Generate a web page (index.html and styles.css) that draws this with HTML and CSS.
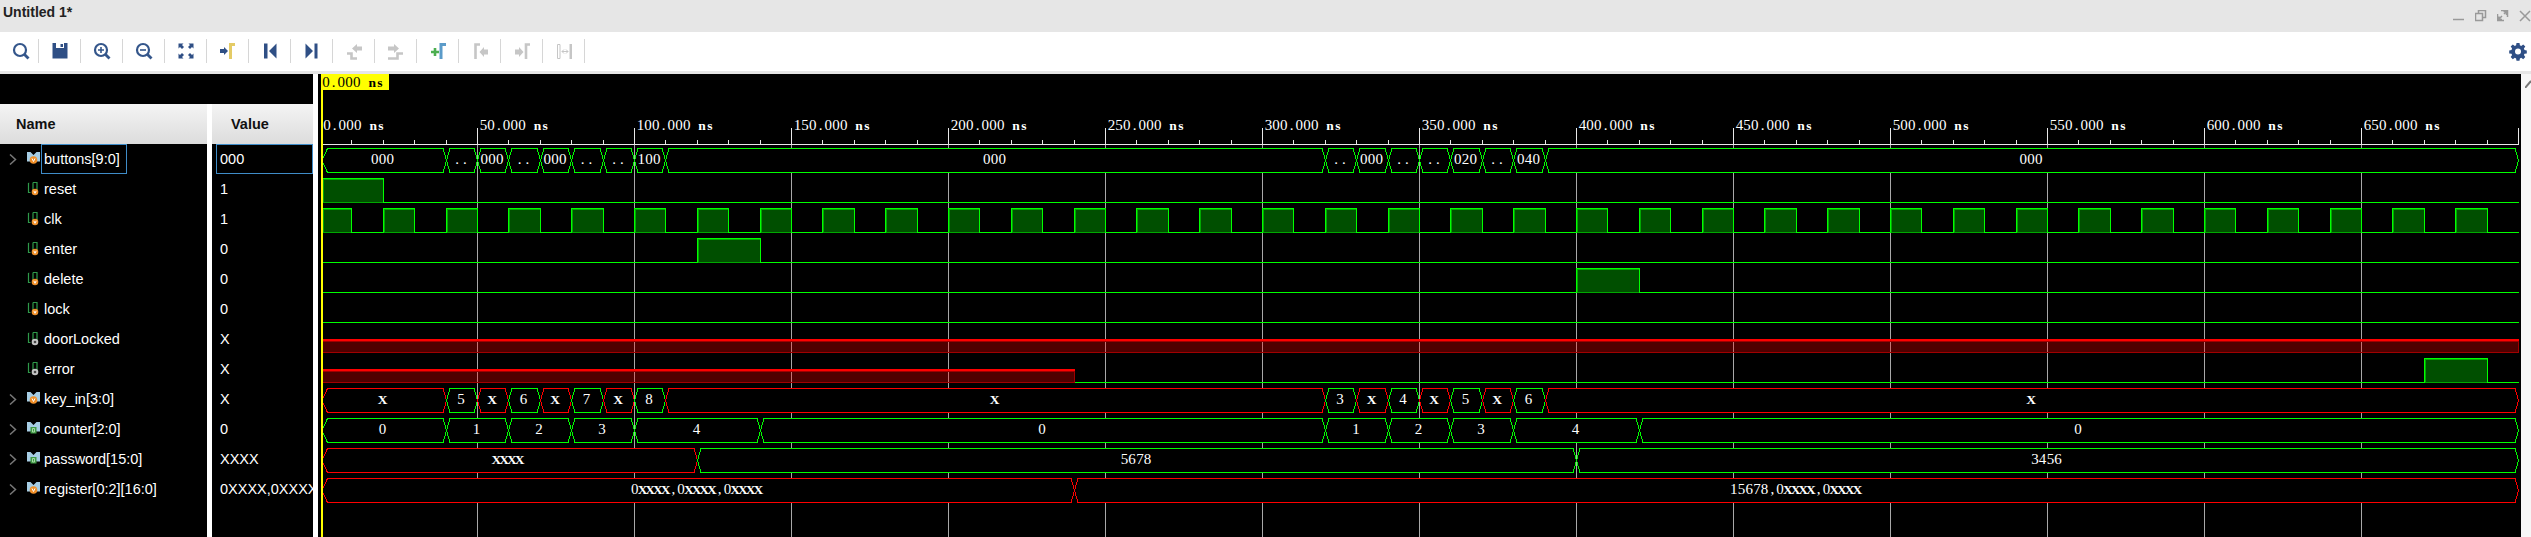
FILE: index.html
```html
<!DOCTYPE html>
<html lang="en">
<head>
<meta charset="utf-8">
<title>Untitled 1*</title>
<link rel="stylesheet" href="styles.css">
</head>
<body>
<header class="titlebar">
  <span class="title">Untitled 1*</span>
  <div class="win-controls">
    <svg class="win" viewBox="0 0 12 12"><path d="M0 9.500h11"/></svg>
    <svg class="win" viewBox="0 0 12 12"><path d="M.5 3.500h7v7h-7zM3.500 3V.5h7v7H8"/></svg>
    <svg class="win" viewBox="0 0 12 12"><path d="M.5 4V10.500H7M4 .5h6.500V7M1 10l4-4M2 6.500V9.500H5M10 1L7 4M6.500 1.500h3V5"/></svg>
    <svg class="win" viewBox="0 0 12 12"><path d="M1 1l10 10M11 1L1 11"/></svg>
  </div>
</header>

<nav class="toolbar">
  <button class="tool"><svg viewBox="0 0 24 24"><circle class="ln" cx="11" cy="11" r="6"/><path class="ln thick" d="M15 15l4.500 4.500"/></svg></button>
  <button class="tool"><svg viewBox="0 0 24 24"><path class="navy" d="M4.500 4H19.500V19.500H4.500z"/><path class="paper" d="M8 4h8v5H8z"/><path class="navy" d="M12.500 5H15V8H12.500z"/></svg></button>
  <button class="tool"><svg viewBox="0 0 24 24"><circle class="ln" cx="11" cy="11" r="6"/><path class="ln thick" d="M15 15l4.500 4.500"/><path class="ln thin" d="M11 8v6M8 11h6"/></svg></button>
  <button class="tool"><svg viewBox="0 0 24 24"><circle class="ln" cx="11" cy="11" r="6"/><path class="ln thick" d="M15 15l4.500 4.500"/><path class="ln thin" d="M8 11h6"/></svg></button>
  <button class="tool"><svg viewBox="0 0 24 24"><path class="navy" d="M4.500 4.500h5l-1.500 1.500 2 2-2 2-2-2-1.500 1.500zM19.500 4.500v5l-1.500-1.500-2 2-2-2 2-2-1.500-1.500zM4.500 19.500v-5l1.500 1.500 2-2 2 2-2 2 1.500 1.500zM19.500 19.500h-5l1.500-1.500-2-2 2-2 2 2 1.500-1.500z"/></svg></button>
  <button class="tool"><svg viewBox="0 0 24 24"><path class="navy" d="M4 10h4V8l4 4-4 4v-2H4z"/><path class="mark-yellow" d="M14.500 20V5.500H19"/></svg></button>
  <button class="tool"><svg viewBox="0 0 24 24"><path class="navy" d="M6 4.500h3.500V19.500H6zM18.500 4.500V19.500L11 12z"/></svg></button>
  <button class="tool"><svg viewBox="0 0 24 24"><path class="navy" d="M17.500 4.500h-3V19.500h3zM5.500 4.500V19.500L13 12z"/></svg></button>
  <button class="tool"><svg viewBox="0 0 24 24"><path class="mark-grey" d="M5 14.500h4.500V19.500H15"/><path class="grey" d="M20 7.500h-5V5l-5 4.500 5 4.500V11.500h5z"/></svg></button>
  <button class="tool"><svg viewBox="0 0 24 24"><path class="mark-grey" d="M4 19.500h9.500V14.500H19"/><path class="grey" d="M4 7.500h6V5l5 4.500L10 14V11.500H4z"/></svg></button>
  <button class="tool"><svg viewBox="0 0 24 24"><path class="plus" d="M5 13h8M9 9v8"/><path class="mark-blue" d="M15 20V5.500H20"/></svg></button>
  <button class="tool"><svg viewBox="0 0 24 24"><path class="mark-grey" d="M7.500 20V5.500H12"/><path class="grey" d="M20 10.500h-4V8l-4.500 5 4.500 5V15.500h4z"/></svg></button>
  <button class="tool"><svg viewBox="0 0 24 24"><path class="grey" d="M5 10.500h4V8l4.500 5L9 18V15.500H5z"/><path class="mark-grey" d="M16 20V5.500H20"/></svg></button>
  <button class="tool"><svg viewBox="0 0 24 24"><path class="hollow" d="M5.500 5.500h2.500V19.500H5.500zM10 12.500h6M10 12.500l2-2M10 12.500l2 2M16 12.500l-2-2M16 12.500l-2 2"/><path class="grey" d="M17.500 5h2.500V20h-2.500z"/></svg></button>
  <svg class="gear" viewBox="0 0 16 16"><path class="navy" fill-rule="evenodd" d="M6.500 0h3l.4 2.300 1.300.6L13.200 1.500l2.100 2.100-1.400 2 .6 1.400 2.300.4v3l-2.300.4-.6 1.300 1.400 2-2.100 2.100-2-1.400-1.300.6-.4 2.300h-3l-.4-2.300-1.300-.6-2 1.400L.7 14.100l1.400-2-.6-1.300L-.8 10.400V7.400l2.300-.4.6-1.400-1.400-2L2.800 1.500l2 1.400 1.300-.6zM8 5.500a3 3 0 1 0 0 6 3 3 0 0 0 0-6z"/></svg>
</nav>
<div class="strip"></div>

<main class="main">
  <section class="signals">
    <div class="signals-top"></div>
    <div class="columns">
      <div class="col col-names">
        <div class="col-head">Name</div>
        <div class="row"><svg class="chev" viewBox="0 0 8 11"><path d="M1 .5l5.500 5-5.500 5"/></svg><svg class="sig" viewBox="0 0 15 14"><use href="#bus-v"/></svg><span class="label selected">buttons[9:0]</span></div>
        <div class="row"><span class="chev-slot"></span><svg class="sig" viewBox="0 0 15 14"><use href="#bit-v"/></svg><span class="label">reset</span></div>
        <div class="row"><span class="chev-slot"></span><svg class="sig" viewBox="0 0 15 14"><use href="#bit-v"/></svg><span class="label">clk</span></div>
        <div class="row"><span class="chev-slot"></span><svg class="sig" viewBox="0 0 15 14"><use href="#bit-v"/></svg><span class="label">enter</span></div>
        <div class="row"><span class="chev-slot"></span><svg class="sig" viewBox="0 0 15 14"><use href="#bit-v"/></svg><span class="label">delete</span></div>
        <div class="row"><span class="chev-slot"></span><svg class="sig" viewBox="0 0 15 14"><use href="#bit-v"/></svg><span class="label">lock</span></div>
        <div class="row"><span class="chev-slot"></span><svg class="sig" viewBox="0 0 15 14"><use href="#bit-o"/></svg><span class="label">doorLocked</span></div>
        <div class="row"><span class="chev-slot"></span><svg class="sig" viewBox="0 0 15 14"><use href="#bit-o"/></svg><span class="label">error</span></div>
        <div class="row"><svg class="chev" viewBox="0 0 8 11"><path d="M1 .5l5.500 5-5.500 5"/></svg><svg class="sig" viewBox="0 0 15 14"><use href="#bus-v"/></svg><span class="label">key_in[3:0]</span></div>
        <div class="row"><svg class="chev" viewBox="0 0 8 11"><path d="M1 .5l5.500 5-5.500 5"/></svg><svg class="sig" viewBox="0 0 15 14"><use href="#bus-g"/></svg><span class="label">counter[2:0]</span></div>
        <div class="row"><svg class="chev" viewBox="0 0 8 11"><path d="M1 .5l5.500 5-5.500 5"/></svg><svg class="sig" viewBox="0 0 15 14"><use href="#bus-g"/></svg><span class="label">password[15:0]</span></div>
        <div class="row"><svg class="chev" viewBox="0 0 8 11"><path d="M1 .5l5.500 5-5.500 5"/></svg><svg class="sig" viewBox="0 0 15 14"><use href="#bus-v"/></svg><span class="label">register[0:2][16:0]</span></div>
      </div>
      <div class="col col-values">
        <div class="col-head col-head-value">Value</div>
        <div class="row"><span class="value selected-value">000</span></div>
        <div class="row"><span class="value">1</span></div>
        <div class="row"><span class="value">1</span></div>
        <div class="row"><span class="value">0</span></div>
        <div class="row"><span class="value">0</span></div>
        <div class="row"><span class="value">0</span></div>
        <div class="row"><span class="value">X</span></div>
        <div class="row"><span class="value">X</span></div>
        <div class="row"><span class="value">X</span></div>
        <div class="row"><span class="value">0</span></div>
        <div class="row"><span class="value">XXXX</span></div>
        <div class="row"><span class="value">0XXXX,0XXXX,0XXXX</span></div>
      </div>
    </div>
  </section>
  <svg id="wave" class="wave" viewBox="318 74 2203 463"></svg>
  <aside class="side"><svg class="side-mark" viewBox="0 0 6 8"><path d="M0 8L6 1"/></svg></aside>
</main>

<svg class="defs">
  <defs>
    <g id="bus-base"><path class="bus-body" d="M1 0h3.500l3 3 3-3H14v9.500H10.500L7.500 7l-3 2.500H1z"/></g>
    <g id="bus-v"><use href="#bus-base"/><circle class="dot-orange" cx="7.500" cy="8" r="3.800"/><path class="dot-mark" d="M6 6.500l1.500 3 1.500-3"/></g>
    <g id="bus-g"><use href="#bus-base"/><rect class="dot-green" x="4.500" y="5" width="6" height="6.500"/><path class="dot-mark-g" d="M6.500 6.500h2v3.500h-2z"/></g>
    <g id="bit-base"><path class="bit-lines" d="M2.500 1v9.500h2M3 1.500L2.500 1M7 .5h4v8M7 .5v8"/></g>
    <g id="bit-v"><use href="#bit-base"/><circle class="dot-orange" cx="9" cy="10" r="3.300"/><path class="dot-mark" d="M7.800 8.800l1.200 2.500 1.200-2.500"/></g>
    <g id="bit-o"><use href="#bit-base"/><circle class="dot-grey" cx="9" cy="10" r="3.300"/><circle class="dot-hole" cx="9" cy="10" r="1.300"/></g>
  </defs>
</svg>
<script src="wave.js"></script>
</body>
</html>
```

FILE: styles.css
```css
* { box-sizing: border-box; }
html, body { margin: 0; height: 537px; overflow: hidden; background: #fff; }
body { font-family: "Liberation Sans", Arial, sans-serif; display: flex; flex-direction: column; }

.titlebar { height: 32px; background: #e6e6e6; display: flex; align-items: flex-start; padding-left: 3px; }
.title { font-size: 14px; font-weight: bold; line-height: 24px; color: #222; }
.win-controls { margin-left: auto; display: flex; gap: 10px; padding-top: 10px; }
.win { width: 12px; height: 12px; fill: none; stroke: #999; stroke-width: 1.500; }

.toolbar { height: 39px; background: #fff; display: flex; align-items: center; padding-bottom: 1px; }
.tool { width: 42px; height: 24px; padding: 0; border: 0; border-right: 1px solid #d6d6d6; background: none; display: flex; align-items: center; justify-content: center; }
.tool:first-child { width: 39px; padding-left: 4px; }
.tool svg { width: 24px; height: 24px; }
.gear { width: 16px; height: 16px; margin-left: auto; margin-right: 5px; overflow: visible; }
.ln { fill: none; stroke: #34568b; stroke-width: 2.200; }
.ln.thick { stroke-width: 2.800; }
.ln.thin { stroke-width: 1.600; }
.navy { fill: #2f4f85; }
.paper { fill: #fff; }
.grey { fill: #c6c6c6; }
.hollow { fill: none; stroke: #c6c6c6; stroke-width: 1; }
.mark-yellow { fill: none; stroke: #e4cb66; stroke-width: 3; }
.mark-grey { fill: none; stroke: #c6c6c6; stroke-width: 2.600; }
.mark-blue { fill: none; stroke: #5b9bc9; stroke-width: 3; }
.plus { fill: none; stroke: #4cae50; stroke-width: 2.600; }

.strip { height: 3px; background: #e6e6e6; }

.main { flex: 1; display: flex; min-height: 0; background: #fff; }
.signals { width: 313px; flex: none; display: flex; flex-direction: column; background: #000; }
.signals-top { height: 30px; }
.columns { flex: 1; display: flex; gap: 5px; background: #fff; }
.col { background: #000; color: #fff; font-size: 14.500px; overflow: hidden; }
.col-names { width: 207px; flex: none; }
.col-values { flex: 1; min-width: 0; }
.col-head { height: 40px; display: flex; align-items: center; padding-left: 16px; font-weight: bold; color: #111; background: linear-gradient(#f4f4f4, #dcdcdc); }
.col-head-value { padding-left: 19px; }
.row { height: 30px; display: flex; align-items: center; white-space: nowrap; }
.chev { width: 8px; height: 11px; margin-left: 9px; margin-right: 9px; fill: none; stroke: #777; stroke-width: 1.500; flex: none; }
.chev-slot { width: 26px; flex: none; }
.sig { width: 15px; height: 14px; flex: none; overflow: visible; }
.label { height: 30px; line-height: 28px; padding: 0 2px; border: 1px solid transparent; }
.label.selected { border-color: #3f8cc8; padding-right: 6px; }
.value { margin-left: 4px; height: 30px; flex: 1; line-height: 28px; padding: 0 3px; border: 1px solid transparent; }
.selected-value { border-color: #3f8cc8; }

.wave { width: 2203px; height: 463px; flex: none; margin-left: 5px; background: #000; display: block; }
.side { flex: 1; padding-top: 6px; background: #f7f7f7; display: flex; justify-content: flex-end; align-items: flex-start; }
.side-mark { width: 6px; height: 8px; fill: none; stroke: #777; stroke-width: 2; }

.defs { width: 0; height: 0; position: absolute; }
.bus-body { fill: #a6cde4; }
.dot-orange { fill: #f0902a; }
.dot-mark { fill: none; stroke: #fff; stroke-width: 1; }
.dot-green { fill: #3f9a45; }
.dot-mark-g { fill: none; stroke: #a6dca8; stroke-width: 1; }
.bit-lines { fill: none; stroke: #2f9a4a; stroke-width: 1.200; }
.dot-grey { fill: #c4c4c4; }
.dot-hole { fill: #444; }

.grid { stroke: #a8a8a8; stroke-width: 1; shape-rendering: crispEdges; }
.tick { stroke: #e8e8e8; stroke-width: 1; shape-rendering: crispEdges; }
.seg { stroke-width: 1; shape-rendering: crispEdges; fill: #000; }
.seg-green { stroke: #00ff00; }
.seg-red { stroke: #ff0000; }
.edge-green { fill: none; stroke: #00ff00; stroke-width: 1; shape-rendering: crispEdges; }
.edge-red { fill: none; stroke: #ff0000; stroke-width: 1; shape-rendering: crispEdges; }
.fill-green { fill: rgba(0, 255, 0, 0.31); stroke: #00a800; stroke-width: 1; shape-rendering: crispEdges; }
.fill-red { fill: rgba(255, 0, 0, 0.31); stroke: #a00000; stroke-width: 1; shape-rendering: crispEdges; }
.wtext { font-family: "Liberation Serif", "Times New Roman", serif; font-size: 15px; fill: #fff; text-anchor: middle; }
.wtext-small { font-size: 13.500px; font-weight: bold; }
.wtext-ns { font-size: 13.500px; font-weight: bold; }
.cursor { stroke: #ffff00; stroke-width: 2; shape-rendering: crispEdges; }
.cursor-box { fill: #ffff00; }
.cursor-text { fill: #000; }
```

FILE: wave.js
```js
// Builds the waveform canvas from the simulation data.
var NS = 'http://www.w3.org/2000/svg';
var svg = document.getElementById('wave');
var X0 = 320, PX = 3.14, ROW0 = 148, PITCH = 30, H = 24, TAPER = 3.5, CELL = 7.72, END = 700;

function px(t) { return Math.round(X0 + t * PX) + 0.5; }
function el(tag, cls, attrs) {
  var e = document.createElementNS(NS, tag);
  if (cls) e.setAttribute('class', cls);
  for (var k in attrs) e.setAttribute(k, attrs[k]);
  svg.appendChild(e);
  return e;
}
function label(str, startX, baseline, extra) {
  var t = el('text', 'wtext' + (extra ? ' ' + extra : ''), { y: baseline });
  for (var i = 0; i < str.length; i++) {
    var ch = str[i], s = document.createElementNS(NS, 'tspan');
    s.setAttribute('x', (startX + CELL * (i + 0.5)).toFixed(1));
    if (ch === 'X') s.setAttribute('class', 'wtext-small');
    else if (ch === 'n' || ch === 's') s.setAttribute('class', 'wtext-ns');
    s.textContent = ch;
    t.appendChild(s);
  }
}

// grid + ruler
for (var t = 50; t < END; t += 50) {
  el('line', 'grid', { x1: px(t), x2: px(t), y1: 144, y2: 537 });
  el('line', 'tick', { x1: px(t), x2: px(t), y1: 128, y2: 144 });
}
el('line', 'tick', { x1: px(END), x2: px(END), y1: 128, y2: 144 });
for (t = 10; t < END; t += 10) {
  if (t % 50) el('line', 'tick', { x1: px(t), x2: px(t), y1: 140, y2: 144 });
}
el('line', 'tick', { x1: 322, x2: px(END), y1: 144.5, y2: 144.5 });
for (t = 0; t < END; t += 50) {
  label(t + '.000 ns', t === 0 ? 323 : px(t) + 2, 130);
}

// signal rows
var rows = [
  { bus: [[0,'000'],[40,'..'],[50,'000'],[60,'..'],[70,'000'],[80,'..'],[90,'..'],[100,'100'],[110,'000'],[320,'..'],[330,'000'],[340,'..'],[350,'..'],[360,'020'],[370,'..'],[380,'040'],[390,'000']] },
  { bit: [[0,1],[20,0]] },
  { bit: (function () { var a = []; for (var i = 0; i < 70; i++) a.push([i * 10, i % 2 ? 0 : 1]); return a; })() },
  { bit: [[0,0],[120,1],[140,0]] },
  { bit: [[0,0],[400,1],[420,0]] },
  { bit: [[0,0]] },
  { bit: [[0,'x']] },
  { bit: [[0,'x'],[240,0],[670,1],[690,0]] },
  { bus: [[0,'X'],[40,'5'],[50,'X'],[60,'6'],[70,'X'],[80,'7'],[90,'X'],[100,'8'],[110,'X'],[320,'3'],[330,'X'],[340,'4'],[350,'X'],[360,'5'],[370,'X'],[380,'6'],[390,'X']] },
  { bus: [[0,'0'],[40,'1'],[60,'2'],[80,'3'],[100,'4'],[140,'0'],[320,'1'],[340,'2'],[360,'3'],[380,'4'],[420,'0']] },
  { bus: [[0,'XXXX'],[120,'5678'],[400,'3456']] },
  { bus: [[0,'0XXXX,0XXXX,0XXXX'],[240,'15678,0XXXX,0XXXX']] }
];

rows.forEach(function (row, r) {
  var top = ROW0 + PITCH * r + 0.5, bot = top + H, mid = top + H / 2, half = top + H / 2;
  if (row.bus) {
    row.bus.forEach(function (seg, i) {
      var a = px(seg[0]), b = i + 1 < row.bus.length ? px(row.bus[i + 1][0]) : px(END);
      if (i === 0) a = 322;
      var isX = seg[1].indexOf('X') >= 0;
      el('polygon', 'seg ' + (isX ? 'seg-red' : 'seg-green'), {
        points: [[a, mid], [a + TAPER + (i === 0 ? 2 : 0), top], [b - TAPER, top], [b, mid], [b - TAPER, bot], [a + TAPER + (i === 0 ? 2 : 0), bot]].join(' ')
      });
      var c = (px(seg[0]) + b) / 2;
      label(seg[1], c - seg[1].length * CELL / 2 - 1, top + 15.5);
    });
  } else {
    row.bit.forEach(function (seg, i) {
      var a = Math.max(px(seg[0]), 322), b = i + 1 < row.bit.length ? px(row.bit[i + 1][0]) : px(END), v = seg[1];
      if (v === 'x') {
        el('rect', 'fill-red', { x: a, y: half + 0.5, width: b - a, height: H / 2 - 0.5 });
        el('path', 'edge-red', { d: 'M' + a + ' ' + half + 'H' + b });
        el('path', 'edge-red', { d: 'M' + a + ' ' + (half - 1) + 'H' + b });
      } else if (v === 1) {
        el('rect', 'fill-green', { x: a + 1, y: top + 1, width: b - a - 1, height: H - 1 });
        el('path', 'edge-green', { d: 'M' + a + ' ' + bot + 'V' + top + 'H' + b + 'V' + bot });
      } else {
        el('path', 'edge-green', { d: 'M' + a + ' ' + bot + 'H' + b });
      }
    });
  }
});

// cursor
el('line', 'cursor', { x1: 321.5, x2: 321.5, y1: 74, y2: 537 });
el('rect', 'cursor-box', { x: 321, y: 74, width: 68, height: 16 });
label('0.000 ns', 322, 87, 'cursor-text');
```
